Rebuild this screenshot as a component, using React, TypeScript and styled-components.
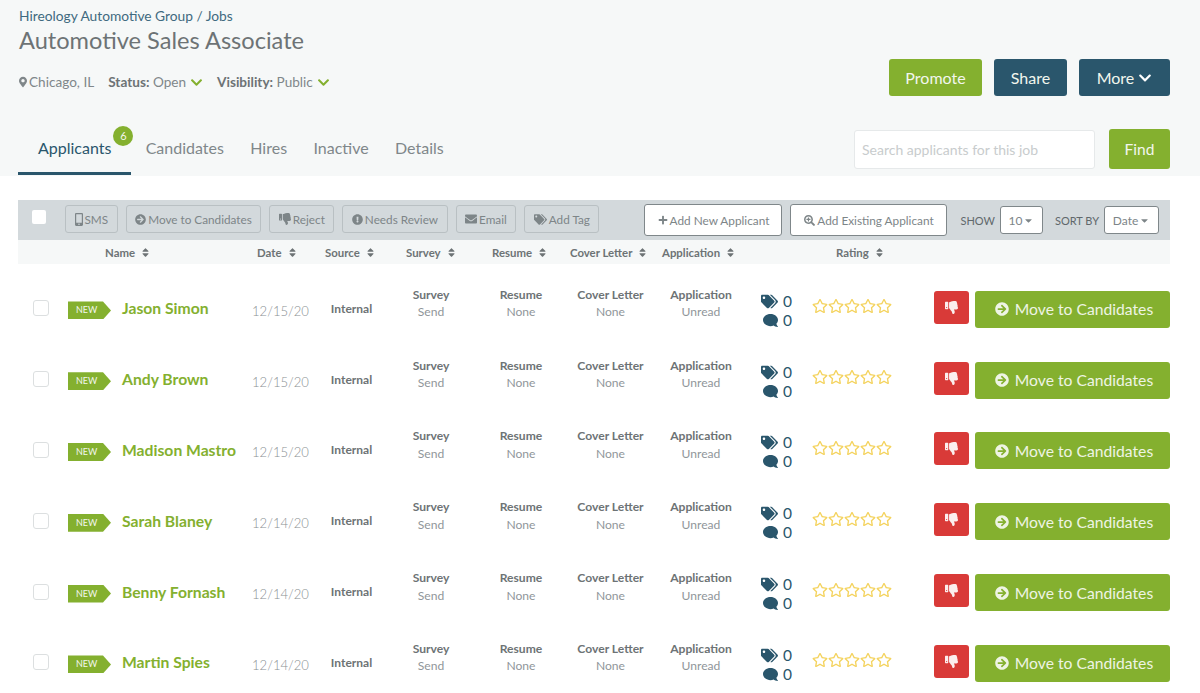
import React from "react"
import styled, { createGlobalStyle } from "styled-components"
import {
  FaMapMarkerAlt,
  FaChevronDown,
  FaMobileAlt,
  FaArrowCircleRight,
  FaThumbsDown,
  FaExclamationCircle,
  FaEnvelope,
  FaTags,
  FaPlus,
  FaSearchPlus,
  FaSort,
  FaCaretDown,
  FaComment,
  FaRegStar,
} from "react-icons/fa"

const GREEN = "#84b02f"
const NAVY = "#2a566c"
const RED = "#d93a38"

const GlobalStyle = createGlobalStyle`
  html, body {
    margin: 0;
    background: #fff;
    overflow: hidden;
  }
  body {
    font-family: Lato, "Open Sans", sans-serif;
    color: #6f7678;
  }
`

const Page = styled.div`
  width: 1200px;
  height: 693px;
  overflow: hidden;
`

const Header = styled.header`
  height: 176px;
  box-sizing: border-box;
  background: #f6f8f8;
  padding: 8px 30px 0 18px;
`

const TopRow = styled.div`
  display: flex;
  justify-content: space-between;
  height: 100px;
`

const Heading = styled.div`
  padding-left: 1px;
`

const Crumb = styled.div`
  font-size: 13.75px;
  line-height: 16px;
  color: #3f6a80;
`

const Title = styled.h1`
  margin: 0;
  font-size: 23.6px;
  line-height: 32px;
  font-weight: 400;
  color: #6d7375;
`

const Meta = styled.div`
  display: flex;
  align-items: center;
  margin-top: 17px;
  font-size: 13.6px;
  line-height: 18px;
  color: #80878a;

  b {
    font-weight: 700;
    color: #6d7375;
  }
`

const MetaItem = styled.span`
  display: flex;
  align-items: center;
  gap: 4px;
  margin-right: 14px;
`

const Pin = styled(FaMapMarkerAlt)`
  width: 8px;
  height: 12px;
  margin-right: -2px;
`

const Actions = styled.div`
  display: flex;
  gap: 12px;
  padding-top: 51px;
`

const BigButton = styled.div<{ $tone: string; $w: number }>`
  width: ${p => p.$w}px;
  height: 37px;
  border-radius: 3px;
  background: ${p => p.$tone};
  color: #f2f6ee;
  font-size: 16px;
  display: flex;
  align-items: center;
  justify-content: center;
  gap: 4px;
`

const TabRow = styled.div`
  display: flex;
  justify-content: space-between;
  align-items: flex-start;
  margin-top: 21px;
`

const Tabs = styled.nav`
  display: flex;
  height: 46px;
`

const Tab = styled.div<{ $active?: boolean }>`
  position: relative;
  box-sizing: border-box;
  padding: 7px ${p => (p.$active ? "20px" : "13.2px")} 0;
  margin-right: ${p => (p.$active ? "1px" : "0")};
  font-size: 16px;
  line-height: 24px;
  color: ${p => (p.$active ? NAVY : "#80878a")};
  border-bottom: ${p => (p.$active ? `3px solid ${NAVY}` : "none")};
`

const Count = styled.span`
  position: absolute;
  top: -3px;
  right: -2px;
  width: 20px;
  height: 20px;
  border-radius: 50%;
  background: ${GREEN};
  color: #f2f6ee;
  font-size: 11px;
  line-height: 20px;
  text-align: center;
`

const Search = styled.div`
  display: flex;
  gap: 14px;
`

const SearchBox = styled.div`
  width: 241px;
  height: 39px;
  box-sizing: border-box;
  margin-top: 1px;
  padding: 0 7px;
  background: #fff;
  border: 1px solid #e6e9ea;
  border-radius: 3px;
  font-size: 14px;
  line-height: 37px;
  color: #c8cccd;
`

const FindButton = styled(BigButton)`
  height: 40px;
  font-size: 15.5px;
`

const Panel = styled.main`
  padding: 24px 30px 0 18px;
`

const Toolbar = styled.div`
  height: 40px;
  box-sizing: border-box;
  background: #d3d9dc;
  display: flex;
  align-items: center;
  padding: 0 12px 0 14px;

  > * {
    flex: none;
  }
`

const HeadCheck = styled.span`
  width: 14px;
  height: 14px;
  background: #fff;
  border-radius: 2px;
  margin-right: 19px;
  margin-bottom: 6px;
`

const ToolButton = styled.span`
  height: 28px;
  box-sizing: border-box;
  margin-right: 8px;
  margin-bottom: 2px;
  padding: 0 8.5px;
  display: flex;
  align-items: center;
  gap: 2px;
  border: 1px solid #b9c0c3;
  border-radius: 3px;
  font-size: 11.75px;
  color: #7d8588;
  white-space: nowrap;
`

const Phone = styled(FaMobileAlt)`
  width: 8px;
  height: 13px;
`

const AddButton = styled.span<{ $w: number }>`
  width: ${p => p.$w}px;
  height: 32px;
  box-sizing: border-box;
  margin-right: 8px;
  display: flex;
  align-items: center;
  justify-content: center;
  gap: 2px;
  background: #fff;
  border: 1px solid #7f878a;
  border-radius: 3px;
  font-size: 11.8px;
  color: #7d8588;
`

const Spacer = styled.span<{ $w: number }>`
  width: ${p => p.$w}px;
`

const FieldLabel = styled.span`
  font-size: 11px;
  color: #60686b;
  white-space: nowrap;
  margin-right: 5px;
`

const Select = styled.span<{ $w: number }>`
  width: ${p => p.$w}px;
  height: 28px;
  box-sizing: border-box;
  margin-right: 12px;
  display: flex;
  align-items: center;
  justify-content: center;
  gap: 1px;
  background: #fff;
  border: 1px solid #7f878a;
  border-radius: 3px;
  font-size: 12px;
  color: #7d8588;
`

const ColumnHead = styled.div`
  height: 24px;
  background: #f6f8f8;
  display: grid;
  grid-template-columns: 87px 152px 68px 81px 86px 78px 92px 174px 1fr;
  align-items: center;
  font-size: 11.4px;
  font-weight: 700;
  color: #6d7375;
`

const HeadCell = styled.span<{ $start?: boolean }>`
  display: flex;
  align-items: center;
  gap: 5px;
  grid-column-start: ${p => (p.$start ? 2 : "auto")};
  white-space: nowrap;
`

const Rows = styled.div`
  display: flex;
  flex-direction: column;
  padding-top: 9px;
`

const Row = styled.div`
  height: 70.8px;
  flex: none;
  display: grid;
  grid-template-columns: 50px 184px 68px 65px 92px 88px 91px 90px 66px 122px 1fr;
  align-items: center;
`

const RowCheck = styled.span`
  width: 16px;
  height: 16px;
  box-sizing: border-box;
  margin-left: 15px;
  background: #fff;
  border: 1px solid #dcdfe0;
  border-radius: 3px;
`

const NameCell = styled.div`
  display: flex;
  align-items: center;
  gap: 11px;
`

const NewTag = styled.span`
  width: 43px;
  height: 18px;
  margin-top: 4px;
  box-sizing: border-box;
  padding-left: 8px;
  background: ${GREEN};
  clip-path: polygon(0 0, 35px 0, 100% 50%, 35px 100%, 0 100%);
  color: #f2f6ee;
  font-size: 9px;
  line-height: 18px;
`

const Name = styled.span`
  font-size: 15.7px;
  font-weight: 700;
  color: ${GREEN};
  white-space: nowrap;
`

const DateCell = styled.span`
  font-size: 13.1px;
  font-weight: 300;
  color: #8a9093;
  margin-top: 5px;
`

const Source = styled.span`
  text-align: center;
  font-size: 12px;
  font-weight: 700;
  color: #6d7375;
  padding-right: 2px;
`

const Stack = styled.div`
  text-align: center;
  font-size: 12.1px;
  line-height: 17.5px;
  color: #90969a;
  margin-bottom: 10px;

  b {
    display: block;
    font-weight: 700;
    color: #6d7375;
  }
`

const Counts = styled.div`
  display: flex;
  flex-direction: column;
  align-items: flex-end;
  width: 46px;
  padding-top: 5px;
  font-size: 15.5px;
  line-height: 19px;
  color: ${NAVY};
`

const CountLine = styled.span`
  display: flex;
  align-items: center;
  gap: 5px;
`

const Bubble = styled(FaComment)`
  transform: scaleX(-1);
`

const Stars = styled.div`
  display: flex;
  color: #f4d35e;
  font-size: 16px;
  margin-bottom: 4px;
`

const RowActions = styled.div`
  display: flex;
  gap: 6px;
  align-items: flex-start;
  margin-top: 2px;
`

const RejectButton = styled.span`
  width: 35px;
  height: 33px;
  border-radius: 3px;
  background: ${RED};
  color: #fbeeee;
  font-size: 13px;
  display: flex;
  align-items: center;
  justify-content: center;
`

const MoveButton = styled.span`
  width: 195px;
  height: 37px;
  box-sizing: border-box;
  padding-left: 3px;
  border-radius: 3px;
  background: ${GREEN};
  color: #eef4e4;
  font-size: 15.7px;
  display: flex;
  align-items: center;
  justify-content: center;
  gap: 6px;
`

const tabs = ["Candidates", "Hires", "Inactive", "Details"]

const heads = ["Name", "Date", "Source", "Survey", "Resume", "Cover Letter", "Application", "Rating"]

const applicants = [
  { name: "Jason Simon", date: "12/15/20" },
  { name: "Andy Brown", date: "12/15/20" },
  { name: "Madison Mastro", date: "12/15/20" },
  { name: "Sarah Blaney", date: "12/14/20" },
  { name: "Benny Fornash", date: "12/14/20" },
  { name: "Martin Spies", date: "12/14/20" },
]

const docs = [
  { title: "Survey", value: "Send" },
  { title: "Resume", value: "None" },
  { title: "Cover Letter", value: "None" },
  { title: "Application", value: "Unread" },
]

const App = () => (
  <Page>
    <GlobalStyle />
    <Header>
      <TopRow>
        <Heading>
          <Crumb>Hireology Automotive Group / Jobs</Crumb>
          <Title>Automotive Sales Associate</Title>
          <Meta>
            <MetaItem>
              <Pin />
              Chicago, IL
            </MetaItem>
            <MetaItem>
              <span>
                <b>Status:</b> Open
              </span>
              <FaChevronDown size={13} color={GREEN} />
            </MetaItem>
            <MetaItem>
              <span>
                <b>Visibility:</b> Public
              </span>
              <FaChevronDown size={13} color={GREEN} />
            </MetaItem>
          </Meta>
        </Heading>
        <Actions>
          <BigButton $tone={GREEN} $w={93}>
            Promote
          </BigButton>
          <BigButton $tone={NAVY} $w={73}>
            Share
          </BigButton>
          <BigButton $tone={NAVY} $w={91}>
            More <FaChevronDown size={14} color="#fff" />
          </BigButton>
        </Actions>
      </TopRow>
      <TabRow>
        <Tabs>
          <Tab $active>
            Applicants
            <Count>6</Count>
          </Tab>
          {tabs.map(tab => (
            <Tab key={tab}>{tab}</Tab>
          ))}
        </Tabs>
        <Search>
          <SearchBox>Search applicants for this job</SearchBox>
          <FindButton $tone={GREEN} $w={61}>
            Find
          </FindButton>
        </Search>
      </TabRow>
    </Header>
    <Panel>
      <Toolbar>
        <HeadCheck />
        <ToolButton>
          <Phone />
          SMS
        </ToolButton>
        <ToolButton>
          <FaArrowCircleRight size={11} />
          Move to Candidates
        </ToolButton>
        <ToolButton>
          <FaThumbsDown size={12} />
          Reject
        </ToolButton>
        <ToolButton>
          <FaExclamationCircle size={11} />
          Needs Review
        </ToolButton>
        <ToolButton>
          <FaEnvelope size={12} />
          Email
        </ToolButton>
        <ToolButton>
          <FaTags size={13} />
          Add Tag
        </ToolButton>
        <Spacer $w={37} />
        <AddButton $w={138}>
          <FaPlus size={10} />
          Add New Applicant
        </AddButton>
        <AddButton $w={157}>
          <FaSearchPlus size={11} />
          Add Existing Applicant
        </AddButton>
        <Spacer $w={5} />
        <FieldLabel>SHOW</FieldLabel>
        <Select $w={43}>
          10 <FaCaretDown size={11} />
        </Select>
        <FieldLabel>SORT BY</FieldLabel>
        <Select $w={55}>
          Date <FaCaretDown size={11} />
        </Select>
      </Toolbar>
      <ColumnHead>
        {heads.map((head, i) => (
          <HeadCell key={head} $start={i === 0}>
            {head} <FaSort size={11} />
          </HeadCell>
        ))}
      </ColumnHead>
      <Rows>
        {applicants.map(person => (
          <Row key={person.name}>
            <RowCheck />
            <NameCell>
              <NewTag>NEW</NewTag>
              <Name>{person.name}</Name>
            </NameCell>
            <DateCell>{person.date}</DateCell>
            <Source>Internal</Source>
            {docs.map(doc => (
              <Stack key={doc.title}>
                <b>{doc.title}</b>
                {doc.value}
              </Stack>
            ))}
            <Counts>
              <CountLine>
                <FaTags size={17} />0
              </CountLine>
              <CountLine>
                <Bubble size={15} />0
              </CountLine>
            </Counts>
            <Stars>
              {[1, 2, 3, 4, 5].map(n => (
                <FaRegStar key={n} />
              ))}
            </Stars>
            <RowActions>
              <RejectButton>
                <FaThumbsDown />
              </RejectButton>
              <MoveButton>
                <FaArrowCircleRight size={14} />
                Move to Candidates
              </MoveButton>
            </RowActions>
          </Row>
        ))}
      </Rows>
    </Panel>
  </Page>
)

export default App
